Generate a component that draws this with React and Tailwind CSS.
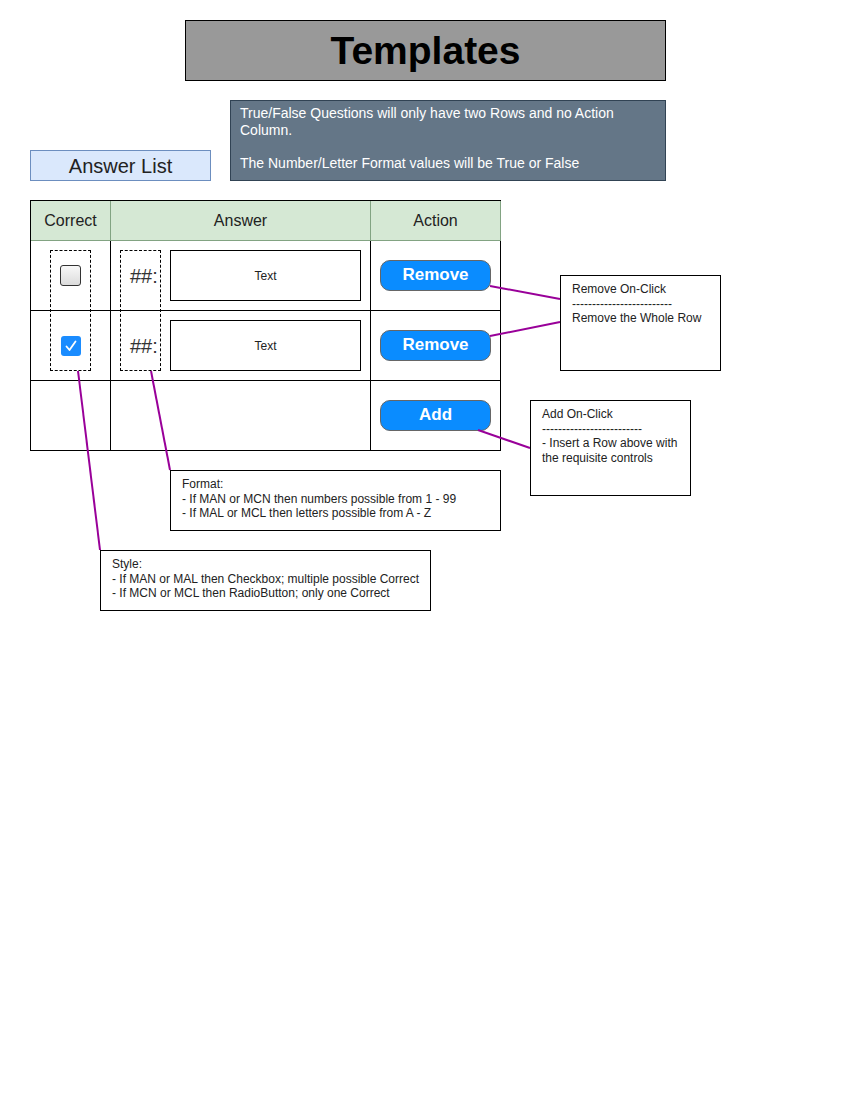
import React from "react";

const font = { fontFamily: "'Liberation Sans', Arial, sans-serif" };

function Checkbox({ checked }) {
  if (checked) {
    return (
      <div className="w-[20px] h-[20px] rounded-[3px] bg-[#1a8cff] flex items-center justify-center">
        <svg width="14" height="14" viewBox="0 0 14 14">
          <path d="M2.5 7.5 L5.5 11 L11.5 2.5" fill="none" stroke="#fff" strokeWidth="1.8" strokeLinecap="round" strokeLinejoin="round" />
        </svg>
      </div>
    );
  }
  return (
    <div className="w-[21px] h-[21px] rounded-[3px] border border-[#333] bg-gradient-to-b from-[#f8f8f8] to-[#dcdcdc]" />
  );
}

function Button({ label }) {
  return (
    <div className="w-[111px] h-[31px] rounded-[10px] border border-[#666] bg-[#0a8cff] flex items-center justify-center pb-px text-white font-bold text-[17px]">
      {label}
    </div>
  );
}

function AnswerRow({ checked, last }) {
  return (
    <div className="flex h-[70px]">
      <div className="w-[80px] border-r border-b border-black flex items-center justify-center">
        {last ? null : <Checkbox checked={checked} />}
      </div>
      <div className="w-[260px] border-r border-b border-black flex items-center">
        {last ? null : (
          <>
            <span className="ml-[19px] w-[40px] text-[20px] text-[#333]">##:</span>
            <div className="w-[191px] h-[51px] border border-black flex items-center justify-center text-[12px] text-[#222]">
              Text
            </div>
          </>
        )}
      </div>
      <div className="w-[130px] border-r border-b border-black flex items-center pl-[9px]">
        <Button label={last ? "Add" : "Remove"} />
      </div>
    </div>
  );
}

function Note({ className, children }) {
  return (
    <div className={"absolute bg-white border border-black pt-[6px] px-[11px] text-[12px] leading-[14.5px] text-[#222] whitespace-pre-line " + className}>
      {children}
    </div>
  );
}

export default function App() {
  return (
    <div className="relative w-[850px] h-[1100px] bg-white overflow-hidden" style={font}>
      {/* title */}
      <div className="absolute left-[185px] top-[20px] w-[481px] h-[61px] bg-[#999999] border border-black flex items-center justify-center pt-[2px]">
        <h1 className="text-[39px] font-bold text-black">Templates</h1>
      </div>

      {/* info */}
      <div className="absolute left-[230px] top-[100px] w-[436px] h-[81px] bg-[#647687] border border-[#314354] px-[9px] pt-[4px] text-white text-[14px] leading-[16.7px] whitespace-pre-line">
        {"True/False Questions will only have two Rows and no Action Column.\n\nThe Number/Letter Format values will be True or False"}
      </div>

      <div className="absolute left-[30px] top-[150px] w-[181px] h-[31px] bg-[#dae8fc] border border-[#6c8ebf] flex items-center justify-center text-[20px] text-[#222]">
        Answer List
      </div>

      {/* table */}
      <div className="absolute left-[30px] top-[200px] w-[471px] border-l border-t border-black">
        <div className="flex h-[40px] bg-[#d5e8d4] text-[16px] text-[#222]">
          <div className="w-[80px] border-r border-b border-[#82a382] flex items-center justify-center">Correct</div>
          <div className="w-[260px] border-r border-b border-[#82a382] flex items-center justify-center">Answer</div>
          <div className="w-[130px] border-r border-b border-[#82a382] flex items-center justify-center">Action</div>
        </div>
        <AnswerRow checked={false} />
        <AnswerRow checked={true} />
        <AnswerRow last />
      </div>

      {/* dashed groups */}
      <div className="absolute left-[50px] top-[250px] w-[41px] h-[121px] border border-dashed border-black" />
      <div className="absolute left-[120px] top-[250px] w-[41px] h-[121px] border border-dashed border-black" />

      {/* connectors */}
      <svg className="absolute left-0 top-0 pointer-events-none" width="850" height="1100">
        <g stroke="#990099" strokeWidth="2" fill="none">
          <line x1="490" y1="286" x2="560" y2="299" />
          <line x1="490" y1="336" x2="560" y2="322" />
          <line x1="478" y1="430" x2="530" y2="448" />
          <line x1="78" y1="371" x2="100" y2="550" />
          <line x1="151" y1="371" x2="170" y2="470" />
        </g>
      </svg>

      <Note className="left-[560px] top-[275px] w-[161px] h-[96px]">
        {"Remove On-Click\n-------------------------\nRemove the Whole Row"}
      </Note>
      <Note className="left-[530px] top-[400px] w-[161px] h-[96px]">
        {"Add On-Click\n-------------------------\n- Insert a Row above with the requisite controls"}
      </Note>
      <Note className="left-[170px] top-[470px] w-[331px] h-[61px]">
        {"Format:\n- If MAN or MCN then numbers possible from 1 - 99\n- If MAL or MCL then letters possible from A - Z"}
      </Note>
      <Note className="left-[100px] top-[550px] w-[331px] h-[61px]">
        {"Style:\n- If MAN or MAL then Checkbox; multiple possible Correct\n- If MCN or MCL then RadioButton; only one Correct"}
      </Note>
    </div>
  );
}
